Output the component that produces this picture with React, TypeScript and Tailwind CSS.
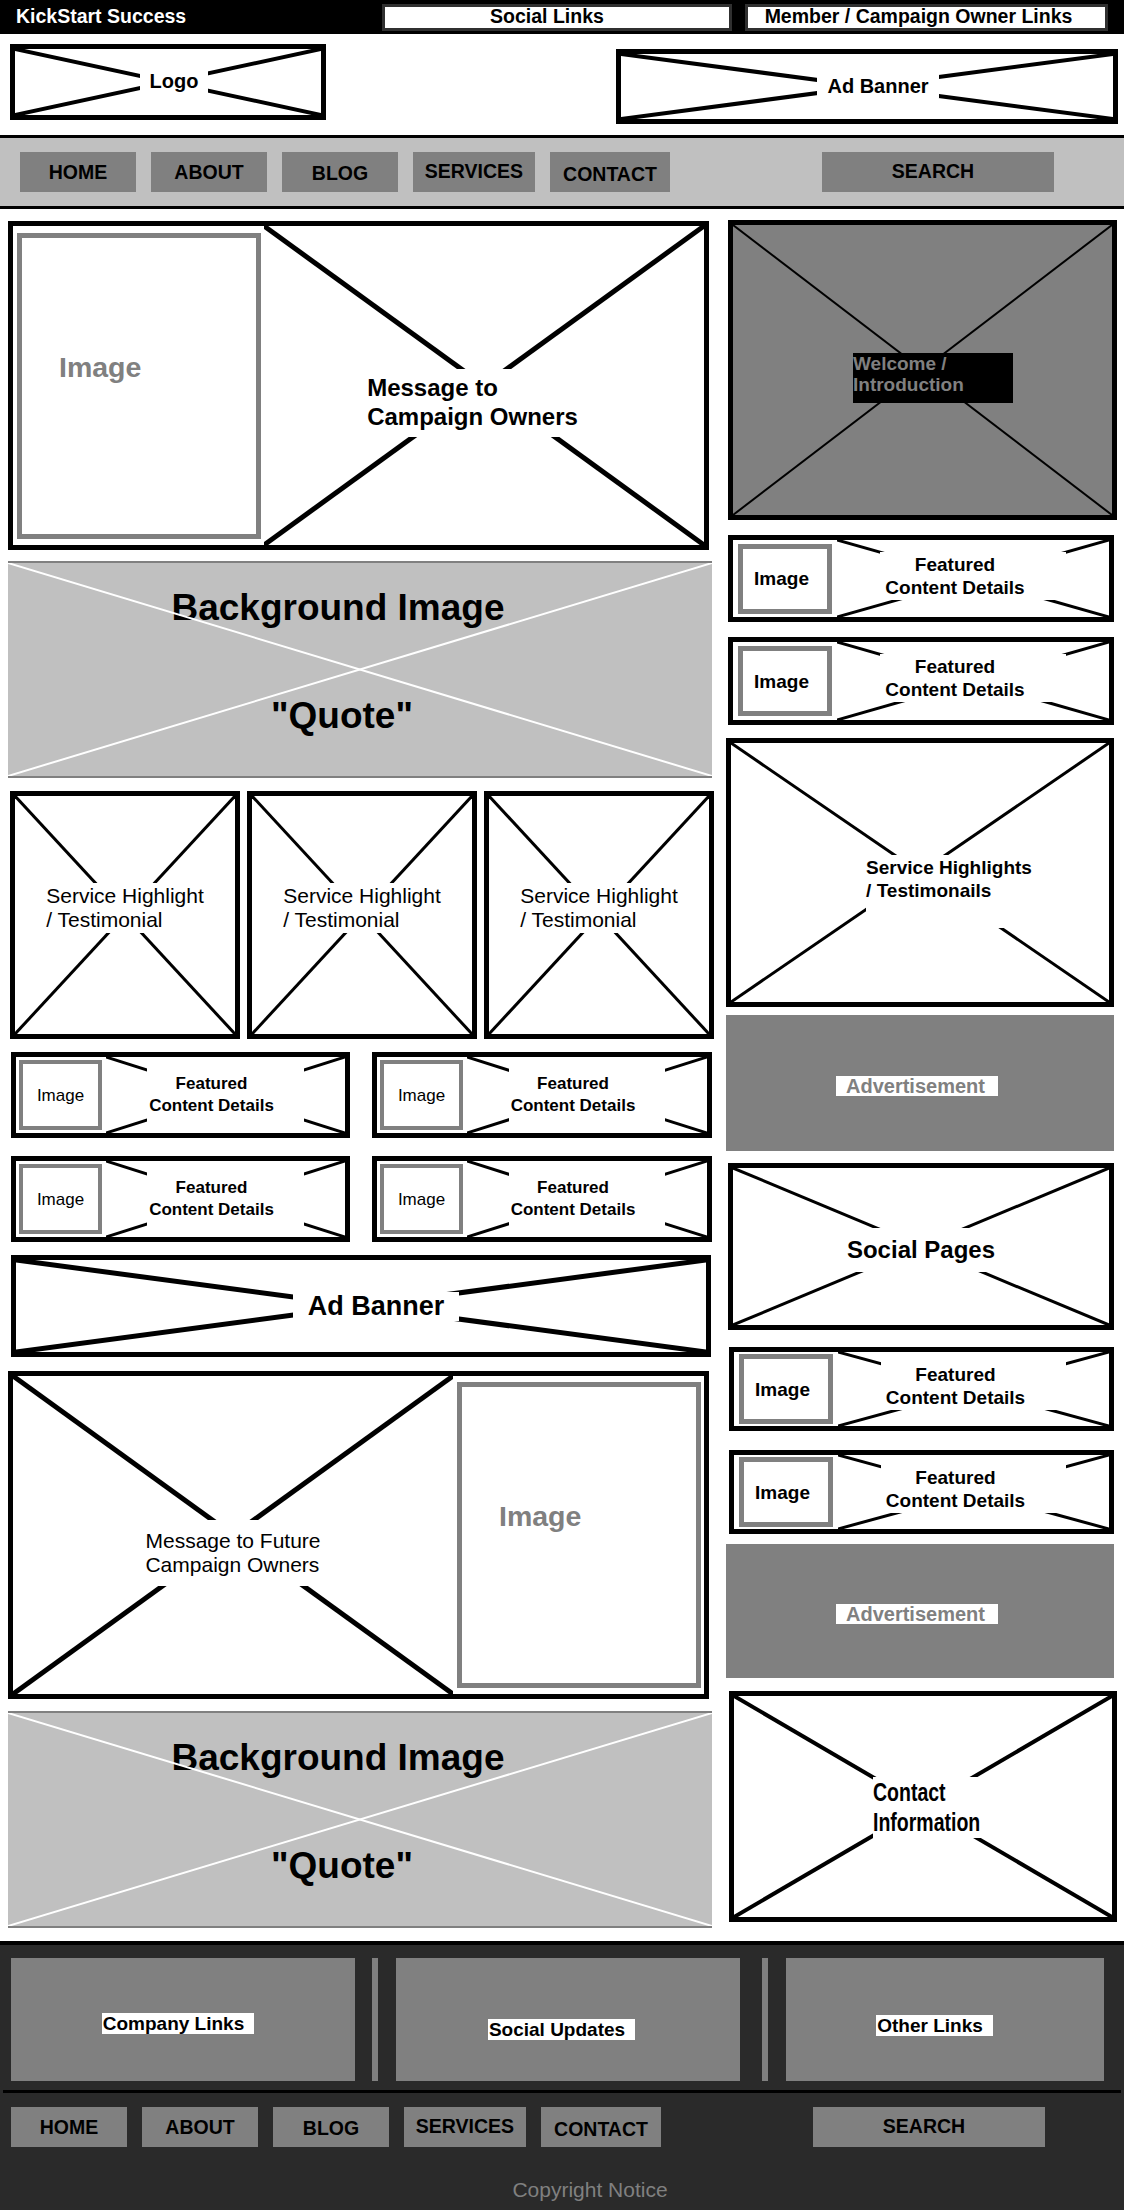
import React from 'react';

// diagonal "placeholder" cross used all over the wireframe
const Cross: React.FC<{ color?: string; size?: number; top?: boolean }> = ({ color = '#000', size = 3, top = false }) => (
  <svg
    className={top ? 'pointer-events-none absolute inset-0 z-20 h-full w-full' : 'pointer-events-none absolute inset-0 h-full w-full'}
    viewBox="0 0 100 100"
    preserveAspectRatio="none"
  >
    <line x1="0" y1="0" x2="100" y2="100" stroke={color} strokeWidth={size} vectorEffect="non-scaling-stroke" />
    <line x1="100" y1="0" x2="0" y2="100" stroke={color} strokeWidth={size} vectorEffect="non-scaling-stroke" />
  </svg>
);

const navItems = [
  { label: 'HOME', cls: 'w-[116px] pt-[2px]' },
  { label: 'ABOUT', cls: 'w-[116px] pt-[2px]' },
  { label: 'BLOG', cls: 'w-[116px] pt-[4px]' },
  { label: 'SERVICES', cls: 'w-[122px] pb-[1px]' },
  { label: 'CONTACT', cls: 'w-[120px] pt-[5px]' },
];

const NavRow: React.FC<{ className: string }> = ({ className }) => (
  <div className={`flex gap-[15px] ${className}`}>
    {navItems.map((n) => (
      <div
        key={n.label}
        className={`flex h-[40px] items-center justify-center bg-[#808080] text-[19.5px] font-bold leading-none text-black ${n.cls}`}
      >
        {n.label}
      </div>
    ))}
    <div className="ml-[137px] flex h-[40px] w-[232px] items-center justify-center bg-[#808080] pb-[1px] pr-[10px] text-[19.5px] font-bold leading-none text-black">
      SEARCH
    </div>
  </div>
);

const BackgroundQuote: React.FC<{ className: string }> = ({ className }) => (
  <div
    className={`relative flex h-[217px] w-[704px] flex-col items-center border-y-2 border-[#808080] bg-[#c0c0c0] pt-[26px] text-[37px] font-bold leading-none ${className}`}
  >
    <span className="mr-[44px]">Background Image</span>
    <span className="mr-[36px] mt-[71px]">"Quote"</span>
    <Cross color="#fff" size={2} top />
  </div>
);

const FeatSmall: React.FC<{ className: string }> = ({ className }) => (
  <div className={`flex h-[86px] items-center border-[5px] border-black ${className}`}>
    <div className="ml-[3px] flex h-[70px] w-[83px] items-center justify-center border-[4px] border-[#808080] text-[17px] leading-none">
      Image
    </div>
    <div className="relative ml-[4px] flex h-full flex-1 items-center justify-center">
      <Cross size={3} />
      <div className="relative z-10 bg-white py-[5px] pl-[2px] pr-[30px] text-center text-[17px] font-bold leading-[22px]">
        Featured
        <br />
        Content Details
      </div>
    </div>
  </div>
);

const FeatBig: React.FC<{ className: string }> = ({ className }) => (
  <div className={`flex items-center border-[5px] border-black ${className}`}>
    <div className="ml-[5px] flex h-[70px] w-[94px] items-center justify-center border-[5px] border-[#808080] pr-[7px] text-[19px] font-bold leading-none">
      Image
    </div>
    <div className="relative ml-[5px] flex h-full flex-1 items-center justify-center">
      <Cross size={3} />
      <div className="relative z-10 mb-[6px] bg-white py-[1px] pl-[5px] pr-[41px] text-center text-[19px] font-bold leading-[23px]">
        Featured
        <br />
        Content Details
      </div>
    </div>
  </div>
);

const Advert: React.FC<{ className: string }> = ({ className }) => (
  <div className={`flex w-[388px] items-center justify-center bg-[#808080] ${className}`}>
    <div className="mr-[6px] mt-[5px] h-[20px] w-[162px] bg-white pl-[10px] text-left text-[20px] font-bold leading-[20px] text-[#808080]">
      Advertisement
    </div>
  </div>
);

const ImageBox: React.FC<{ className: string }> = ({ className }) => (
  <div
    className={`h-[306px] w-[244px] border-[5px] border-[#808080] pl-[37px] pt-[113px] text-[28.5px] font-bold leading-[32px] text-[#808080] ${className}`}
  >
    Image
  </div>
);

const FooterBox: React.FC<{ className: string; label: string; labelCls: string }> = ({ className, label, labelCls }) => (
  <div className={`flex h-full items-center justify-center bg-[#808080] ${className}`}>
    <span className={`bg-white pl-[1px] pr-[10px] text-[19px] font-bold leading-[21px] text-black ${labelCls}`}>{label}</span>
  </div>
);

export default function App() {
  return (
    <div className="w-[1124px] bg-white font-['Liberation_Sans',Arial,sans-serif] text-black">
      {/* top bar */}
      <div className="flex h-[34px] items-center bg-black">
        <div className="w-[382px] pl-[16px] text-[19.5px] font-bold leading-none text-white">KickStart Success</div>
        <div className="flex h-[27px] w-[350px] items-center justify-center border-[3px] border-[#303030] bg-white pr-[20px] text-[19.5px] font-bold leading-none">
          Social Links
        </div>
        <div className="ml-[13px] flex h-[27px] w-[363px] items-center justify-center border-[3px] border-[#303030] bg-white pr-[16px] text-[19.5px] font-bold leading-none">
          Member / Campaign Owner Links
        </div>
      </div>

      {/* logo + banner */}
      <div className="flex h-[101px] items-start">
        <div className="relative ml-[10px] mt-[10px] flex h-[76px] w-[316px] items-center justify-center border-[5px] border-black">
          <Cross size={4} />
          <span className="relative z-10 mb-[2px] ml-[12px] bg-white px-[10px] text-[20px] font-bold leading-[24px]">Logo</span>
        </div>
        <div className="relative ml-auto mr-[6px] mt-[15px] flex h-[75px] w-[502px] items-center justify-center border-[5px] border-black">
          <Cross size={4} />
          <span className="relative z-10 mb-[2px] ml-[22px] bg-white px-[10px] text-[20px] font-bold leading-[24px]">Ad Banner</span>
        </div>
      </div>

      <div className="h-[3px] bg-black" />
      <div className="h-[68px] bg-[#c0c0c0] pt-[14px]">
        <NavRow className="pl-[20px]" />
      </div>
      <div className="h-[3px] bg-black" />

      {/* main content */}
      <div className="flex pb-[13px] pl-[8px] pt-[11px]">
        {/* left column */}
        <div className="flex w-[706px] flex-col">
          <div className="mt-[1px] flex h-[329px] w-[701px] border-[5px] border-black">
            <ImageBox className="ml-[4px] mt-[7px]" />
            <div className="relative ml-[3px] flex flex-1 items-center justify-center">
              <Cross size={5} />
              <div className="relative z-10 mr-[23px] mt-[35px] bg-white px-[4px] pb-[6px] pt-[4px] text-[24px] font-bold leading-[29px]">
                Message to
                <br />
                Campaign Owners
              </div>
            </div>
          </div>

          <BackgroundQuote className="mt-[11px]" />

          <div className="ml-[2px] mt-[13px] flex h-[248px] gap-[7px]">
            {[0, 1, 2].map((i) => (
              <div key={i} className="relative flex w-[230px] items-center justify-center border-[5px] border-black">
                <Cross size={3} />
                <div className="relative z-10 mb-[14px] bg-white py-[1px] text-[21px] leading-[24px]">
                  Service Highlight
                  <br />/ Testimonial
                </div>
              </div>
            ))}
          </div>

          <div className="ml-[3px] mt-[13px] flex gap-[22px]">
            <FeatSmall className="w-[339px]" />
            <FeatSmall className="w-[340px]" />
          </div>
          <div className="ml-[3px] mt-[18px] flex gap-[22px]">
            <FeatSmall className="w-[339px]" />
            <FeatSmall className="w-[340px]" />
          </div>

          <div className="relative ml-[3px] mt-[13px] flex h-[102px] w-[700px] items-center justify-center border-[5px] border-black">
            <Cross size={5} />
            <span className="relative z-10 ml-[30px] bg-white px-[15px] text-[27px] font-bold leading-[29px]">Ad Banner</span>
          </div>

          <div className="mt-[14px] flex h-[328px] w-[701px] border-[5px] border-black">
            <div className="relative flex flex-1 items-center justify-center">
              <Cross size={5} />
              <div className="relative z-10 mt-[36px] bg-white px-[4px] py-[9px] text-[21px] leading-[24px]">
                Message to Future
                <br />
                Campaign Owners
              </div>
            </div>
            <ImageBox className="ml-[4px] mr-[3px] mt-[6px]" />
          </div>

          <BackgroundQuote className="mt-[12px]" />
        </div>

        {/* right column */}
        <div className="ml-[12px] flex w-[392px] flex-col">
          <div className="relative ml-[2px] flex h-[300px] w-[389px] items-start border-[5px] border-black bg-[#808080]">
            <Cross size={2} />
            <div className="relative z-10 ml-[120px] mt-[128px] h-[50px] w-[160px] bg-black text-[19px] font-bold leading-[21px] text-[#808080]">
              Welcome /
              <br />
              Introduction
            </div>
          </div>

          <FeatBig className="ml-[2px] mt-[15px] h-[87px] w-[386px]" />
          <FeatBig className="ml-[2px] mt-[15px] h-[88px] w-[386px]" />

          <div className="relative mt-[13px] flex h-[269px] w-[388px] items-center justify-center border-[5px] border-black">
            <Cross size={3} />
            <div className="relative z-10 ml-[64px] mt-[37px] bg-white pb-[26px] pr-[6px] pt-[1px] text-[19px] font-bold leading-[23px]">
              Service Highlights
              <br />/ Testimonails
            </div>
          </div>

          <Advert className="mt-[8px] h-[136px]" />

          <div className="relative ml-[2px] mt-[12px] flex h-[167px] w-[386px] items-center justify-center border-[5px] border-black">
            <Cross size={3} />
            <div className="relative z-10 mt-[7px] bg-white py-[8px] text-[24px] font-bold leading-[28px]">Social Pages</div>
          </div>

          <FeatBig className="ml-[3px] mt-[17px] h-[84px] w-[385px]" />
          <FeatBig className="ml-[3px] mt-[19px] h-[84px] w-[385px]" />

          <Advert className="mt-[10px] h-[134px]" />

          <div className="relative ml-[3px] mt-[13px] flex h-[231px] w-[388px] items-center justify-center border-[5px] border-black">
            <Cross size={4} />
            <div className="relative z-10 ml-[12px] mt-[2px] h-[61px] w-[112px] bg-white">
              <div className="origin-left scale-x-[0.78] whitespace-nowrap text-[25px] font-bold leading-[30px]">
                Contact
                <br />
                Information
              </div>
            </div>
          </div>
        </div>
      </div>

      {/* footer */}
      <div className="border-t-4 border-black bg-[#2a2a2a] pb-[8px] pt-[13px]">
        <div className="flex h-[123px] pl-[11px]">
          <FooterBox className="w-[344px]" label="Company Links" labelCls="mr-[10px] mt-[8px]" />
          <div className="ml-[17px] w-[6px] bg-[#808080]" />
          <FooterBox className="ml-[18px] w-[344px]" label="Social Updates" labelCls="mr-[13px] mt-[19px]" />
          <div className="ml-[22px] w-[6px] bg-[#808080]" />
          <FooterBox className="ml-[18px] w-[318px]" label="Other Links" labelCls="mr-[21px] mt-[11px]" />
        </div>
        <div className="mx-[3px] mt-[9px] h-[3px] bg-black" />
        <NavRow className="mt-[14px] pl-[11px]" />
        <div className="mt-[31px] pl-[56px] text-center text-[21px] leading-[24px] text-[#808080]">Copyright Notice</div>
      </div>
    </div>
  );
}
